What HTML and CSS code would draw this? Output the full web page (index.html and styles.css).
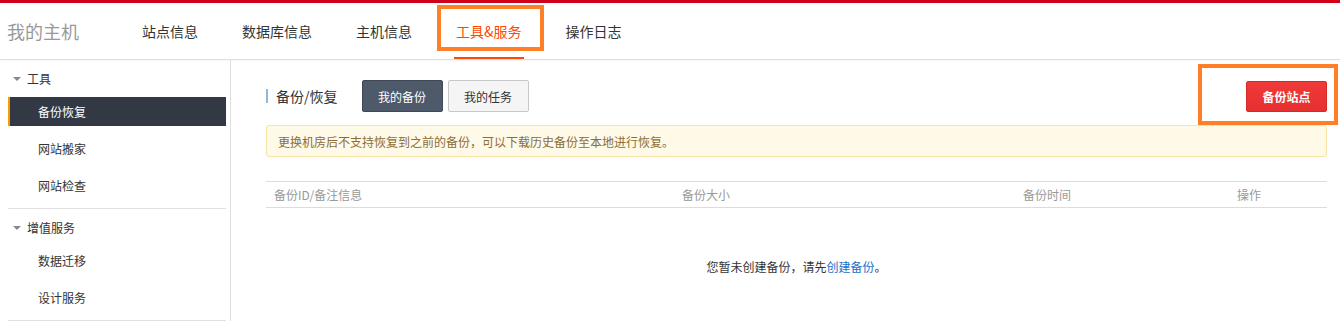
FILE: index.html
```html
<html>
<head>
    <meta charset="utf-8">
    <link rel="stylesheet" href="styles.css">
</head>
<body>
    <div class="topbar"></div>
    <div class="header">
        <div class="brand">我的主机</div>
        <ul class="nav">
            <li class="nav-item">站点信息</li>
            <li class="nav-item">数据库信息</li>
            <li class="nav-item">主机信息</li>
            <li class="nav-item active">工具&amp;服务<span class="mark mark-nav"></span></li>
            <li class="nav-item">操作日志</li>
        </ul>
    </div>
    <div class="main">
        <div class="sidebar">
            <div class="group">
                <div class="group-title"><i class="caret"></i>工具</div>
                <div class="side-item current">备份恢复</div>
                <div class="side-item">网站搬家</div>
                <div class="side-item">网站检查</div>
            </div>
            <div class="group">
                <div class="group-title"><i class="caret"></i>增值服务</div>
                <div class="side-item">数据迁移</div>
                <div class="side-item">设计服务</div>
            </div>
        </div>
        <div class="content">
            <div class="toolbar">
                <div class="page-title">备份/恢复</div>
                <div class="tabs">
                    <button class="tab tab-on">我的备份</button>
                    <button class="tab">我的任务</button>
                </div>
                <div class="actions">
                    <button class="btn-red">备份站点</button>
                    <span class="mark mark-btn"></span>
                </div>
            </div>
            <div class="notice">更换机房后不支持恢复到之前的备份，可以下载历史备份至本地进行恢复。</div>
            <div class="table">
                <div class="thead">
                    <div class="th">备份ID/备注信息</div>
                    <div class="th">备份大小</div>
                    <div class="th">备份时间</div>
                    <div class="th">操作</div>
                </div>
                <div class="empty">您暂未创建备份，请先<a href="#" class="link">创建备份</a>。</div>
            </div>
        </div>
    </div>
</body>
</html>
```

FILE: styles.css
```css
body {
    margin: 0;
    font-family: "Noto Sans CJK SC", "Liberation Sans", sans-serif;
    font-size: 12px;
    color: #333;
    background-color: #fff;
}

.topbar {
    height: 3px;
    background-color: #d0021b;
}

.header {
    display: flex;
    align-items: center;
    height: 56px;
    border-bottom: 1px solid #dedede;
    box-shadow: 0 1px 2px rgba(0, 0, 0, 0.04);
}

.brand {
    width: 113px;
    padding-left: 7px;
    font-size: 18px;
    color: #999;
}

.nav {
    display: flex;
    height: 100%;
    margin: 0;
    padding: 0;
    list-style: none;
}

.nav-item {
    position: relative;
    display: flex;
    align-items: center;
    padding: 0 22px;
    font-size: 14px;
    color: #333;
}

.nav-item.active {
    color: #ff4a00;
}

.nav-item.active::after {
    content: "";
    position: absolute;
    left: 20px;
    right: 20px;
    bottom: 0;
    height: 2px;
    background-color: #ff4a00;
}

/* orange highlight frames */
.mark {
    position: absolute;
    border: 4px solid #ff7f27;
    pointer-events: none;
}

.mark-nav {
    left: 3px;
    right: 0;
    top: 2px;
    bottom: 8px;
}

.mark-btn {
    left: -48px;
    right: -11px;
    top: -17px;
    bottom: -13px;
}

.main {
    display: flex;
}

.sidebar {
    width: 222px;
    padding-left: 8px;
    border-right: 1px solid #e0e0e0;
}

.group {
    border-bottom: 1px solid #e0e0e0;
    width: 218px;
    padding-bottom: 8px;
}

.group-title {
    display: flex;
    align-items: center;
    height: 37px;
    padding-left: 5px;
    font-size: 12px;
}

.caret {
    width: 0;
    height: 0;
    margin-right: 6px;
    border-left: 4px solid transparent;
    border-right: 4px solid transparent;
    border-top: 4px solid #888;
}

.side-item {
    display: flex;
    align-items: center;
    height: 29px;
    padding-left: 30px;
    margin-bottom: 8px;
}

.side-item:last-child {
    margin-bottom: 0;
}

.side-item.current {
    padding-left: 28px;
    border-left: 2px solid #ff9900;
    background-color: #323844;
    color: #fff;
}

.content {
    flex: 1;
    padding: 20px 13px 0 35px;
}

.toolbar {
    display: flex;
    align-items: center;
    height: 32px;
}

.page-title {
    display: flex;
    align-items: center;
    height: 14px;
    padding-left: 8px;
    border-left: 2px solid #8cb9de;
    font-size: 14px;
}

.tabs {
    display: flex;
    gap: 5px;
    margin-left: 24px;
}

.tab {
    width: 81px;
    height: 32px;
    padding: 0;
    border: 1px solid #c8c8c8;
    border-radius: 2px;
    background-color: #f5f5f5;
    font-family: inherit;
    font-size: 12px;
    color: #333;
}

.tab-on {
    border-color: #3e4857;
    background-color: #4e596a;
    color: #fff;
}

.actions {
    position: relative;
    margin-left: auto;
}

.btn-red {
    display: block;
    width: 81px;
    height: 31px;
    padding: 0;
    border: 1px solid #d7282a;
    border-radius: 2px;
    background: linear-gradient(#f03a3a, #e62f2f);
    font-family: inherit;
    font-size: 12px;
    font-weight: bold;
    color: #fff;
}

.notice {
    display: flex;
    align-items: center;
    height: 30px;
    margin-top: 13px;
    padding-left: 11px;
    border: 1px solid #f8e3a6;
    border-radius: 3px;
    background-color: #fffae8;
    color: #8a6d3b;
}

.table {
    margin-top: 24px;
}

.thead {
    display: grid;
    grid-template-columns: 408px 341px 214px 1fr;
    height: 25px;
    border-top: 1px solid #dcdcdc;
    border-bottom: 1px solid #dcdcdc;
}

.th {
    display: flex;
    align-items: center;
    padding-left: 8px;
    color: #999;
}

.empty {
    padding-top: 50px;
    text-align: center;
    line-height: 18px;
}

.link {
    color: #1a6fc9;
    text-decoration: none;
}
```
